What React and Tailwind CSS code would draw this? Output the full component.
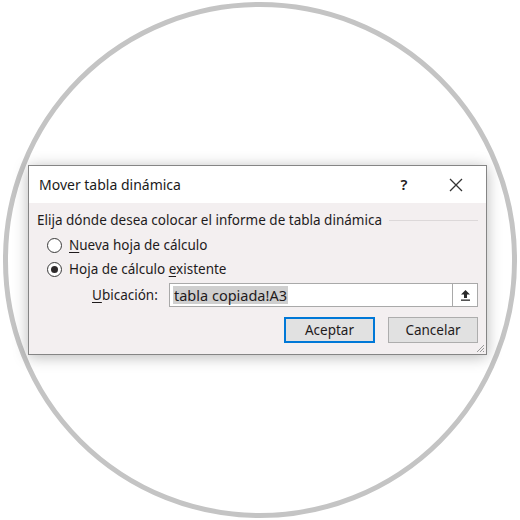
import React from "react";

const font = { fontFamily: '"Noto Sans", "Open Sans", sans-serif' };

function Radio({ checked }) {
    return (
        <span className="w-[15px] h-[15px] rounded-full border border-[#3a3a3a] bg-white flex items-center justify-center shrink-0">
            {checked && <span className="w-[7px] h-[7px] rounded-full bg-[#2e2a2b]" />}
        </span>
    );
}

export default function App() {
    return (
        <div className="w-[520px] h-[520px] bg-white relative" style={font}>
            {/* circular frame */}
            <div className="absolute left-[3px] top-[2px] w-[514px] h-[516px] rounded-full border-[5px] border-[#c4c4c4]" />

            <div className="relative w-[520px] h-[520px] flex items-start">
                {/* dialog */}
                <div className="mt-[165px] ml-[28px] w-[459px] h-[190px] border border-[#858585] bg-[#f3eff0] shadow-[0_2px_14px_rgba(0,0,0,0.28)] flex flex-col text-[13.5px] text-[#1f1b1c]">
                    {/* title bar */}
                    <div className="h-[37px] bg-white flex items-center pl-[10px] shrink-0">
                        <span className="flex-1 text-[14px] text-[#1b1b1b]">Mover tabla dinámica</span>
                        <span className="w-[20px] text-center text-[15px] font-semibold mr-[35px]">?</span>
                        <svg width="14" height="14" viewBox="0 0 14 14" className="mr-[23px]">
                            <path d="M1 1 L13 13 M13 1 L1 13" stroke="#333" strokeWidth="1.3" />
                        </svg>
                    </div>

                    {/* body */}
                    <div className="flex-1 flex flex-col pl-[8px] pr-[8px] pt-[8px] relative">
                        <div className="flex items-center h-[18px]">
                            <span className="whitespace-nowrap">Elija dónde desea colocar el informe de tabla dinámica</span>
                            <span className="flex-1 h-px bg-[#dcd8d9] ml-[7px]" />
                        </div>

                        <div className="flex items-center h-[24px] mt-[4px] pl-[10px] gap-[7px]">
                            <Radio />
                            <span>
                                <span className="underline underline-offset-2">N</span>ueva hoja de cálculo
                            </span>
                        </div>
                        <div className="flex items-center h-[24px] pl-[10px] gap-[7px]">
                            <Radio checked />
                            <span>
                                Hoja de cálculo <span className="underline underline-offset-2">e</span>xistente
                            </span>
                        </div>

                        <div className="flex items-center h-[24px] mt-[2px]">
                            <span className="ml-[55px] w-[77px]">
                                <span className="underline underline-offset-2">U</span>bicación:
                            </span>
                            <div className="flex-1 h-[24px] border border-[#a9a9a9] bg-white flex items-center">
                                <span className="ml-[3px] bg-[#cfcfcf] px-[1px] leading-[18px] text-[14.5px]">tabla copiada!A3</span>
                                <span className="flex-1" />
                                <span className="w-[25px] h-[22px] border-l border-[#a9a9a9] flex items-center justify-center">
                                    <svg width="11" height="12" viewBox="0 0 11 12">
                                        <path d="M5.5 1 L10 5.5 H7 V9 H4 V5.5 H1 Z" fill="#2b2b2b" />
                                        <rect x="1" y="10.5" width="9" height="1.3" fill="#2b2b2b" />
                                    </svg>
                                </span>
                            </div>
                        </div>

                        <div className="flex justify-end gap-[13px] mt-[10px]">
                            <button className="w-[91px] h-[26px] bg-[#e1e1e1] border-2 border-[#0078d7] text-[13.5px]">Aceptar</button>
                            <button className="w-[90px] h-[26px] bg-[#e1e1e1] border border-[#adadad] text-[13.5px]">Cancelar</button>
                        </div>

                        {/* resize grip */}
                        <svg width="10" height="10" viewBox="0 0 10 10" className="absolute right-[1px] bottom-[1px]">
                            <path d="M9 2 L2 9 M9 5 L5 9 M9 8 L8 9" stroke="#9a9a9a" strokeWidth="1" />
                        </svg>
                    </div>
                </div>
            </div>
        </div>
    );
}
